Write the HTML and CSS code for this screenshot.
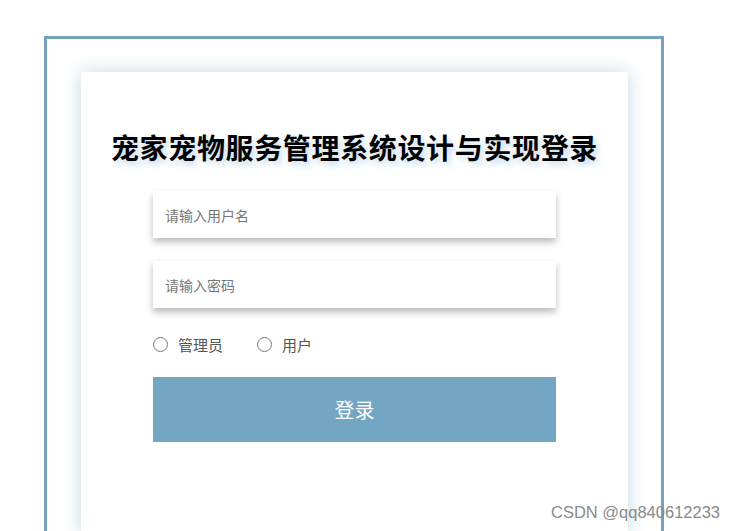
FILE: index.html
```html
<!DOCTYPE html>
<html lang="zh-CN">
<head>
  <meta charset="UTF-8" />
  <title>宠家宠物服务管理系统设计与实现登录</title>
  <link rel="stylesheet" href="styles.css">
</head>
<body>

  <div class="frame">
    <div class="card">
      <h1 class="title">宠家宠物服务管理系统设计与实现登录</h1>

      <form class="login-form" onsubmit="return false">
        <input class="field" type="text" placeholder="请输入用户名">
        <input class="field" type="password" placeholder="请输入密码">

        <div class="roles">
          <label class="role"><input type="radio" name="role"> 管理员</label>
          <label class="role"><input type="radio" name="role"> 用户</label>
        </div>

        <button class="submit" type="submit">登录</button>
      </form>
    </div>
  </div>

  <div class="watermark">CSDN @qq840612233</div>

</body>
</html>
```

FILE: styles.css
```css
body {
  margin: 0;
  padding: 0;
  background: #fff;
  font-family: "Noto Sans CJK SC", "Noto Sans", sans-serif;
  color: #333;
  overflow: hidden;
}

.frame {
  margin: 36px 0 0 44px;
  width: 620px;
  height: 495px;
  border: 3px solid #77a3bd;
  border-bottom: none;
  padding: 33px 33px 0 34px;
  box-sizing: border-box;
}

.card {
  background: #fff;
  height: 462px;
  box-shadow: 0 0 18px rgba(120, 170, 195, 0.45);
  padding-top: 56px;
  box-sizing: border-box;
}

.title {
  margin: 0;
  font-size: 28px;
  font-weight: bold;
  line-height: 38px;
  text-align: center;
  color: #000;
  letter-spacing: 0.65px;
  text-shadow: 3px 4px 6px rgba(110, 165, 205, 0.4);
}

.login-form {
  width: 403px;
  margin: 25px auto 0;
  display: flex;
  flex-direction: column;
}

.field {
  height: 47px;
  border: none;
  outline: none;
  padding: 0 12px;
  font-size: 14px;
  font-family: inherit;
  color: #333;
  background: #fff;
  box-shadow: 0 4px 7px rgba(0, 0, 0, 0.28);
  margin-bottom: 23px;
}

.field::placeholder {
  color: #777;
}

.roles {
  display: flex;
  gap: 34px;
  align-items: center;
  margin-top: 1px;
  height: 24px;
}

.role {
  display: flex;
  align-items: center;
  font-size: 15px;
  color: #555;
  gap: 10px;
}

.role input {
  margin: 0;
  width: 15px;
  height: 15px;
}

.submit {
  margin-top: 21px;
  height: 65px;
  border: none;
  background: #73a6c2;
  color: #fff;
  font-size: 20px;
  font-family: inherit;
  cursor: pointer;
}

.watermark {
  position: absolute;
  left: 551px;
  top: 503px;
  font-family: "Liberation Sans", Arial, sans-serif;
  font-size: 16.5px;
  color: #8a8a8a;
}
```
